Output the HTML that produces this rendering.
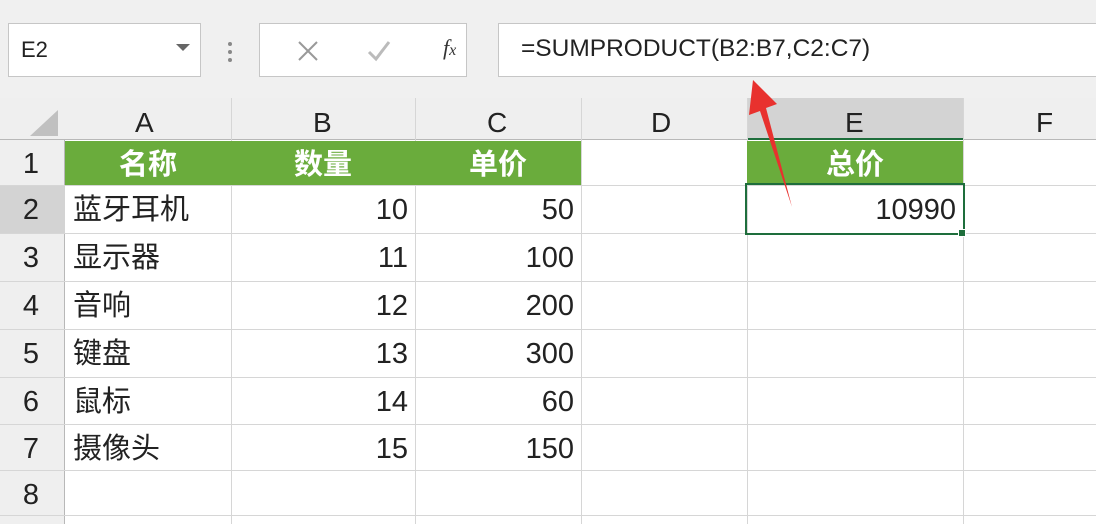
<!DOCTYPE html><html><head><meta charset="utf-8"><style>
body{margin:0;width:1096px;height:524px;overflow:hidden;background:#fff;position:relative;font-family:"Liberation Sans","Noto Sans CJK SC",sans-serif;}
.a{position:absolute;box-sizing:border-box;}
.t{position:absolute;font-size:29px;color:#222;line-height:48px;}
.h{position:absolute;font-size:29px;color:#fff;font-weight:bold;line-height:44px;text-align:center;}
</style></head><body>
<div class="a" style="left:0;top:0;width:1096px;height:98px;background:#f0f0f0"></div>
<div class="a" style="left:8px;top:23px;width:193px;height:54px;background:#fff;border:1px solid #c6c6c6"></div>
<div class="t" style="left:21px;top:26px;font-size:22px;">E2</div>
<div class="a" style="left:176px;top:44px;width:0;height:0;border-left:7px solid transparent;border-right:7px solid transparent;border-top:7px solid #666"></div>
<div class="a" style="left:228px;top:42px;width:4px;height:4px;background:#888;border-radius:2px"></div>
<div class="a" style="left:228px;top:50px;width:4px;height:4px;background:#888;border-radius:2px"></div>
<div class="a" style="left:228px;top:58px;width:4px;height:4px;background:#888;border-radius:2px"></div>
<div class="a" style="left:259px;top:23px;width:208px;height:54px;background:#fff;border:1px solid #c6c6c6"></div>
<svg class="a" style="left:295px;top:38px" width="100" height="26"><path d="M4 4L22 22M22 4L4 22" stroke="#999" stroke-width="2"/><path d="M74 14L81 21L94 4" stroke="#bbb" stroke-width="3" fill="none"/></svg>
<div class="t" style="left:443px;top:24px;font-size:22px;font-style:italic;font-family:'Liberation Serif',serif;color:#333">f<span style="font-size:16px">x</span></div>
<div class="a" style="left:498px;top:23px;width:610px;height:54px;background:#fff;border:1px solid #c6c6c6"></div>
<div class="t" style="left:521px;top:25px;font-size:24.5px;color:#222">=SUMPRODUCT(B2:B7,C2:C7)</div>
<div class="a" style="left:0;top:98px;width:1096px;height:42px;background:#efefef;border-bottom:1px solid #b8b8b8"></div>
<div class="a" style="left:747px;top:98px;width:216px;height:42px;background:#d3d3d3;border-bottom:2px solid #1e6e3c"></div>
<svg class="a" style="left:28px;top:108px" width="32" height="30"><path d="M30 2L30 28L2 28Z" fill="#c0c0c0"/></svg>
<div class="a" style="left:0;top:140px;width:65px;height:384px;background:#efefef;border-right:1px solid #b8b8b8"></div>
<div class="a" style="left:0;top:185px;width:65px;height:48px;background:#d3d3d3"></div>
<svg class="a" style="left:0;top:98px" width="1096" height="426">
<g stroke="#d6d6d6" stroke-width="1">
<line x1="231.5" y1="0" x2="231.5" y2="426"/><line x1="415.5" y1="0" x2="415.5" y2="426"/><line x1="581.5" y1="0" x2="581.5" y2="426"/><line x1="747.5" y1="0" x2="747.5" y2="426"/><line x1="963.5" y1="0" x2="963.5" y2="426"/>
<line x1="0" y1="87.5" x2="1096" y2="87.5"/><line x1="0" y1="135.5" x2="1096" y2="135.5"/><line x1="0" y1="183.5" x2="1096" y2="183.5"/><line x1="0" y1="231.5" x2="1096" y2="231.5"/><line x1="0" y1="279.5" x2="1096" y2="279.5"/><line x1="0" y1="326.5" x2="1096" y2="326.5"/><line x1="0" y1="372.5" x2="1096" y2="372.5"/><line x1="0" y1="417.5" x2="1096" y2="417.5"/>
</g></svg>
<div class="a" style="left:65px;top:141px;width:516px;height:44px;background:#6aac3c"></div>
<div class="a" style="left:747px;top:141px;width:216px;height:44px;background:#6aac3c"></div>
<div class="t" style="left:135px;top:100px;font-size:28px;line-height:46px">A</div>
<div class="t" style="left:313px;top:100px;font-size:28px;line-height:46px">B</div>
<div class="t" style="left:487px;top:100px;font-size:28px;line-height:46px">C</div>
<div class="t" style="left:651px;top:100px;font-size:28px;line-height:46px">D</div>
<div class="t" style="left:845px;top:100px;font-size:28px;line-height:46px">E</div>
<div class="t" style="left:1036px;top:100px;font-size:28px;line-height:46px">F</div>
<div class="h" style="left:65px;top:143px;width:166px">名称</div>
<div class="h" style="left:231px;top:143px;width:184px">数量</div>
<div class="h" style="left:415px;top:143px;width:166px">单价</div>
<div class="h" style="left:747px;top:143px;width:216px">总价</div>
<div class="t" style="left:0;width:62px;text-align:center;top:140px">1</div>
<div class="t" style="left:0;width:62px;text-align:center;top:186px">2</div>
<div class="t" style="left:0;width:62px;text-align:center;top:234px">3</div>
<div class="t" style="left:0;width:62px;text-align:center;top:282px">4</div>
<div class="t" style="left:0;width:62px;text-align:center;top:330px">5</div>
<div class="t" style="left:0;width:62px;text-align:center;top:378px">6</div>
<div class="t" style="left:0;width:62px;text-align:center;top:425px">7</div>
<div class="t" style="left:0;width:62px;text-align:center;top:471px">8</div>
<div class="t" style="left:73px;top:186px">蓝牙耳机</div><div class="t" style="left:231px;width:177px;text-align:right;top:186px">10</div><div class="t" style="left:415px;width:159px;text-align:right;top:186px">50</div>
<div class="t" style="left:73px;top:234px">显示器</div><div class="t" style="left:231px;width:177px;text-align:right;top:234px">11</div><div class="t" style="left:415px;width:159px;text-align:right;top:234px">100</div>
<div class="t" style="left:73px;top:282px">音响</div><div class="t" style="left:231px;width:177px;text-align:right;top:282px">12</div><div class="t" style="left:415px;width:159px;text-align:right;top:282px">200</div>
<div class="t" style="left:73px;top:330px">键盘</div><div class="t" style="left:231px;width:177px;text-align:right;top:330px">13</div><div class="t" style="left:415px;width:159px;text-align:right;top:330px">300</div>
<div class="t" style="left:73px;top:378px">鼠标</div><div class="t" style="left:231px;width:177px;text-align:right;top:378px">14</div><div class="t" style="left:415px;width:159px;text-align:right;top:378px">60</div>
<div class="t" style="left:73px;top:425px">摄像头</div><div class="t" style="left:231px;width:177px;text-align:right;top:425px">15</div><div class="t" style="left:415px;width:159px;text-align:right;top:425px">150</div>
<div class="a" style="left:745px;top:183px;width:220px;height:52px;border:2px solid #1e6e3c"></div>
<div class="a" style="left:958px;top:229px;width:8px;height:8px;background:#1e6e3c;border:1px solid #fff"></div>
<div class="t" style="left:747px;width:209px;text-align:right;top:186px">10990</div>
<svg class="a" style="left:740px;top:70px" width="70" height="150"><path d="M52 137L26 38L37 34L13 10L9 45L20 41Z" fill="#e8312e"/></svg>
</body></html>
